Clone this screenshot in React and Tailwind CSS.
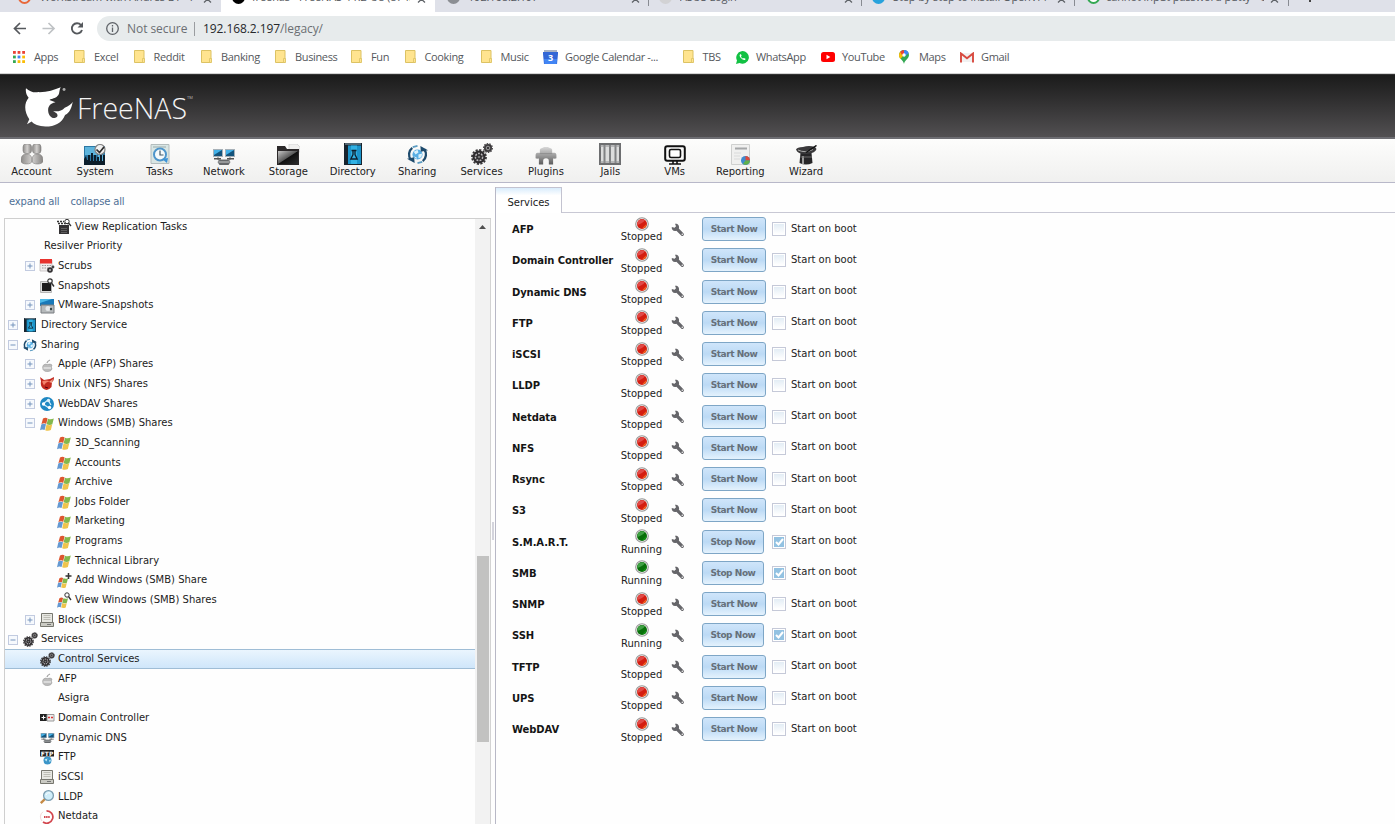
import React from "react";

const SANS = "font-['DejaVu_Sans',Verdana,sans-serif]";
const CHROME = "font-['Open_Sans','Noto_Sans',sans-serif]";

/* ---------- small icons ---------- */
const Folder = () => (
  <svg width="12" height="14" viewBox="0 0 12 14"><path d="M.5.5h9.500v12H.5z" fill="#ffe48f" stroke="#dcc263" /><path d="M8.500 8.500h2v4h-2z" fill="#ffe48f" stroke="#dcc263" strokeWidth=".8" /></svg>
);
const AppsGrid = () => {
  const c = ["#ea4335", "#ea4335", "#ea4335", "#34a853", "#4285f4", "#fbbc05", "#34a853", "#fbbc05", "#fbbc05"];
  return <svg width="12" height="12" viewBox="0 0 12 12">{c.map((f, i) => <rect key={i} x={(i % 3) * 4.6} y={Math.floor(i / 3) * 4.6} width="2.800" height="2.800" fill={f} />)}</svg>;
};
const Calendar = () => (
  <svg width="15" height="14" viewBox="0 0 15 14"><path d="M1 0h13v4H1z" fill="#a9b3c4" /><path d="M0 2h15v2l-1 10H1L0 4z" fill="#3367d6" /><path d="M1 9h13l-.5 5h-12z" fill="#4285f4" /><text x="7.500" y="11" textAnchor="middle" fontSize="9" fontWeight="bold" fill="#fff" fontFamily="Open Sans">3</text></svg>
);
const WhatsApp = () => (
  <svg width="13" height="13" viewBox="0 0 13 13"><path d="M0 13l1-3.600A6.300 6.300 0 1 1 3.600 12z" fill="#12c143" /><path d="M4.200 3.200c-1 .8-.7 2.200.7 3.900 1.500 1.800 3.500 2.500 4.400 1.600l.2-1-1.700-.8-.8.7c-1-.4-1.600-1-2-2l.6-.8-.6-1.600z" fill="#fff" /></svg>
);
const YouTube = () => <svg width="14" height="10" viewBox="0 0 14 10"><rect width="14" height="10" rx="2.500" fill="#f00" /><path d="M5.500 2.800v4.400L9.300 5z" fill="#fff" /></svg>;
const MapsPin = () => (
  <svg width="10" height="14" viewBox="0 0 10 14"><path d="M5 14C4.500 10.500 0 8.500 0 5a5 5 0 0 1 10 0c0 3.500-4.500 5.500-5 9z" fill="#34a853" /><path d="M0 5a5 5 0 0 1 1.200-3.200L5 5 1.300 9A6 6 0 0 1 0 5z" fill="#fbbc04" /><path d="M1.200 1.800A5 5 0 0 1 5 0l.5 4L3 5z" fill="#ea4335" /><path d="M5 0a5 5 0 0 1 4.700 3.300L5 7z" fill="#4285f4" /><circle cx="5" cy="5" r="1.700" fill="#fff" /></svg>
);
const Gmail = () => <svg width="14" height="11" viewBox="0 0 14 11"><path d="M2 1h10v9H2z" fill="#f1f1f1" /><path d="M1 10.500V1.500l6 4.800 6-4.800v9" fill="none" stroke="#d8493e" strokeWidth="1.900" /></svg>;

const Gears = ({ s }) => (
  <svg width={s} height={s} viewBox="0 0 22 22">
    <circle cx="8" cy="14" r="6.500" fill="#2e2c2e" /><circle cx="8" cy="14" r="7" fill="none" stroke="#383638" strokeWidth="1.800" strokeDasharray="2.200 1.460" />
    <circle cx="8" cy="14" r="3.600" fill="none" stroke="#b9b6b9" strokeWidth="1.500" strokeDasharray="1.900 1.200" /><circle cx="8" cy="14" r="1.300" fill="#777" />
    <circle cx="17" cy="5" r="4" fill="#3b393b" /><circle cx="17" cy="5" r="4.300" fill="none" stroke="#4a484a" strokeWidth="1.400" strokeDasharray="1.500 1.130" /><circle cx="17" cy="5" r="1.800" fill="none" stroke="#aaa" strokeWidth=".9" />
  </svg>
);
const Share = ({ s }) => (
  <svg width={s} height={s} viewBox="0 0 22 22">
    <circle cx="11" cy="11" r="5.300" fill="#58aee4" /><path d="M7 8l4-2 1 3-3 2zM12 11l4-1-1 4-3 1zM7 13l3 1v2z" fill="#d9f1fc" />
    <path d="M5.500 4A9 9 0 0 0 4 16.500M16.500 18A9 9 0 0 0 18 5.500" fill="none" stroke="#1d4a6c" strokeWidth="2.400" />
    <path d="M0 15.500l8 4.500-.500-6zM22 6.500L14 2l.5 6z" fill="#1d4a6c" /><path d="M6 3.200l5-1.200M16 18.800l-5 1.200" stroke="#5b9cc2" strokeWidth="1.800" />
  </svg>
);
const Book = ({ w, h }) => (
  <svg width={w} height={h} viewBox="0 0 18 22" preserveAspectRatio="none"><rect width="18" height="22" fill="#17242e" /><path d="M1 1h16" stroke="#94a9b5" /><path d="M4 2.500h13V21H4z" fill="#1b93c9" /><path d="M7 2.500h6V21H7z" fill="#31b1e3" /><path d="M7.500 7.500h5M9 7.500v4L6.800 16h6.400L11 11.500v-4" fill="none" stroke="#10202c" strokeWidth="1.300" /></svg>
);

const AccountI = () => (
  <svg width="22" height="21" viewBox="0 0 22 21"><defs><linearGradient id="gr" x1="0" x2="1"><stop offset="0" stopColor="#8d8b89" /><stop offset=".5" stopColor="#d2d0ce" /><stop offset="1" stopColor="#858381" /></linearGradient></defs>
    <rect x="2" y="0" width="8.500" height="9.500" rx="3" fill="url(#gr)" stroke="#807e7c" strokeWidth=".6" /><rect x="11.500" y="0" width="8.500" height="9.500" rx="3" fill="url(#gr)" stroke="#807e7c" strokeWidth=".6" />
    <path d="M0 17c0-5 2-7 5.500-7S11 12 11 17c0 4-11 4-11 0zM11 17c0-5 2-7 5.500-7s5.500 2 5.500 7c0 4-11 4-11 0z" fill="url(#gr)" stroke="#807e7c" strokeWidth=".6" /></svg>
);
const SystemI = () => (
  <svg width="22" height="21" viewBox="0 0 22 21"><path d="M0 2h21v19H0z" fill="#2c77a3" /><path d="M1 3h12v8H1zM14 11h6v6h-6z" fill="#5db4dc" /><path d="M0 21v-6l2-3 1 4h1v-5h2v6h1V9h2v8h1v-6h2v6h1v-4h2v4h1v-6h2v6h1v-6h2v10z" fill="#0c1e2b" /><circle cx="16" cy="5.500" r="5" fill="#f1f1f1" stroke="#858585" strokeWidth="1.200" /><path d="M12.500 5.500l3 3L20 3" fill="none" stroke="#2b2b2b" strokeWidth="1.700" /></svg>
);
const TasksI = () => (
  <svg width="20" height="21" viewBox="0 0 20 21"><path d="M1 .5h18v19H1z" fill="#d9e6e4" stroke="#b4bdbd" /><path d="M3 3h13" stroke="#9aabac" /><circle cx="10" cy="10.500" r="6" fill="#f5fafb" stroke="#4e95cb" strokeWidth="2" /><path d="M10 6.500V11h3.500" fill="none" stroke="#465a68" strokeWidth="1.200" /><path d="M12 15l5 4 1-5z" fill="#3d93d7" /></svg>
);
const NetworkI = ({ w = 22, h = 16 }) => (
  <svg width={w} height={h} viewBox="0 0 22 16"><path d="M0 0h10v8H0zM12 0h10v8H12z" fill="#a7b1b8" /><path d="M1 1h8v6H1zM13 1h8v6h-8z" fill="#14547c" /><path d="M1 1h8L1 6zM13 1h8l-8 5z" fill="#43b1e8" /><path d="M5 8v3h12V8" fill="none" stroke="#777" /><path d="M1 9h7v1.500H1zM14 9h7v1.500h-7z" fill="#555" /><path d="M6.500 11h9l2 2-2 3h-9l-2-3z" fill="#65686b" /><path d="M5.500 13h11" stroke="#c9cacb" /></svg>
);
const StorageI = () => (
  <svg width="23" height="21" viewBox="0 0 23 21"><defs><linearGradient id="st" x1="0" y1="0" x2="1" y2="1"><stop offset="0" stopColor="#c6c6c6" /><stop offset=".48" stopColor="#5a5a5a" /><stop offset=".52" stopColor="#101010" /><stop offset="1" stopColor="#2c2c2c" /></linearGradient></defs><path d="M12 0h8l3 3v5H12z" fill="#f0f0ef" stroke="#c6c6c6" strokeWidth=".6" /><path d="M0 2h8l2 3h12v16H0z" fill="#2b2829" /><path d="M1 7h20v13H1z" fill="url(#st)" /></svg>
);
const PluginsI = () => (
  <svg width="22" height="18" viewBox="0 0 22 19"><defs><linearGradient id="pl" x2="0" y2="1"><stop offset="0" stopColor="#d8d8d8" /><stop offset="1" stopColor="#5c5c5c" /></linearGradient></defs><path d="M4.500 3q.5-2 2.500-2l2-1h4l2 1q2 0 2.500 2v3h2.500q2 0 2 3v3q-2 1-3 0l-.5 1v5.500h-4.500V15q0-3-3-3t-3 3v3.500H3.500V13L3 12q-1 1-3 0V9q0-3 2-3h2.500z" fill="url(#pl)" /><path d="M4.500 7h13" stroke="#858585" strokeWidth=".8" /></svg>
);
const JailsI = () => (
  <svg width="22" height="22" viewBox="0 0 22 22"><path d="M1 1h20v20H1z" fill="#dcdddd" stroke="#6d6e70" strokeWidth="2" /><path d="M5.500 2v18M11 2v18M16.500 2v18" stroke="#808284" strokeWidth="2" /><path d="M1 3h20M1 19h20" stroke="#8f9092" /></svg>
);
const VMsI = () => (
  <svg width="22" height="20" viewBox="0 0 22 20"><rect x="1.200" y="1.200" width="19.600" height="14.600" rx="2" fill="#f9f9f8" stroke="#111" strokeWidth="2" /><rect x="5.500" y="4.500" width="11" height="8" rx="1.500" fill="#fff" stroke="#111" strokeWidth="1.600" /><path d="M9 16v3M13 16v3M5 19h12" stroke="#111" strokeWidth="1.600" /></svg>
);
const ReportI = () => (
  <svg width="19" height="21" viewBox="0 0 19 21"><path d="M.5.5h18v20H.5z" fill="#f0f0ef" stroke="#cfd0cf" /><path d="M4 4.500h12" stroke="#a5a7a8" strokeWidth="2" /><path d="M3 9h7M3 12h6M3 15h6" stroke="#d9dada" /><circle cx="14.500" cy="16.500" r="4.500" fill="#3f89cf" /><path d="M14.500 16.500V12A4.500 4.500 0 0 1 19 16.500z" fill="#dc4b3c" /><path d="M14.500 16.500H19a4.500 4.500 0 0 1-7 3.500z" fill="#5fb14a" /></svg>
);
const WizardI = () => (
  <svg width="22" height="20" viewBox="0 0 22 20"><path d="M5.500 8h11l1 10q-6.500 3-13 0z" fill="#262527" /><path d="M8 11v8" stroke="#9a9a9a" strokeWidth="2" /><path d="M1 4.500Q2 2 8 2q6-2 12 0l1.500 2q-1 4-9 5-10 .5-11.500-4.500z" fill="#3a393b" /><path d="M3 5q7 3.500 15-.5" stroke="#aaa" fill="none" /><path d="M11 7.500L21.500.5" stroke="#111" strokeWidth="1.500" /><path d="M5.500 12h11.500" stroke="#6d6d6d" /></svg>
);

const WinFlag = () => (
  <g><path d="M3 1.500C5 .2 6.700.7 7.600 1.400L6.200 6.900C4.600 6.100 3 6.200 1.400 7.200z" fill="#dd5630" /><path d="M8 1.700c1.900.9 3.800.8 5.800-.2l-1.500 5.800C10.700 8.200 8.500 8.200 6.600 7.200z" fill="#83b84c" /><path d="M1.300 7.500C2.800 6.600 4.500 6.500 6 7.300L4.600 13c-1.500-.8-3.100-.8-4.600.3z" fill="#6499d2" /><path d="M6.500 7.600c1.900.9 3.800 1 5.700 0L10.900 13c-1.900 1.100-4 1-5.700.2z" fill="#efc44c" /></g>
);
const S = ({ children }) => <svg width="14" height="14" viewBox="0 0 14 14" className="overflow-visible">{children}</svg>;
const treeIcons = {
  rep: <S><path d="M2 5h10v9H2z" fill="#343234" /><path d="M4 8.500h6M4 10.500h6M4 12.500h6" stroke="#6b696b" strokeWidth=".8" /><path d="M0 1.500h7M1 3.500h11" stroke="#333" strokeWidth="1.500" strokeDasharray="2 1" /><circle cx="10" cy="1.500" r="2.200" fill="#fff" stroke="#333" /><path d="M11.500 3l2.500 3" stroke="#333" strokeWidth="1.300" /></S>,
  scrub: <S><path d="M0 1h12v11H0z" fill="#f2eeee" stroke="#b9b4b4" strokeWidth=".7" /><path d="M0 0h12v4.500H0z" fill="#e8332e" /><path d="M2 6.500h9M2 9h7" stroke="#999" strokeDasharray="1.500 1" /><circle cx="10" cy="11" r="2.800" fill="#353335" /><circle cx="10" cy="11" r="1" fill="#bbb" /><circle cx="13" cy="8" r="1.400" fill="#444" /></S>,
  snap: <S><path d="M.5 2.500h11v11H.5z" fill="#ddd" stroke="#b6b6b6" /><path d="M2 4h9v8H2z" fill="#1b1a1b" /><circle cx="10" cy="2" r="2.200" fill="#fff" stroke="#333" strokeWidth="1.200" /><path d="M11.500 4l2.500 3.500" stroke="#333" strokeWidth="1.400" /></S>,
  vm: <S><path d="M0 0h14v7H0z" fill="#1878b8" /><path d="M0 0h12L0 4z" fill="#4ab8e8" /><path d="M1 6h13v8H1z" fill="#b5b9bb" stroke="#787d80" /><circle cx="8" cy="9.500" r="2.500" fill="#e3e7e9" /><circle cx="11" cy="10" r="1.200" fill="#344" /></S>,
  dir: <Book w={12} h={14} />,
  share: <Share s={14} />,
  apple: <S><path d="M3.500 7q2-1.500 4-.5 3-1 4.500.5-1.500 2 0 4-1 2.500-4 2.500-4 .5-5-2-1-3 .5-4.500z" fill="#bcbcbc" stroke="#999" strokeWidth=".6" /><path d="M7 5q.5-2 3-3" stroke="#a5a5a5" fill="none" strokeWidth="1.300" /><path d="M3.500 10h7.500" stroke="#efefef" strokeWidth="1.200" /></S>,
  unix: <S><path d="M0 0l4 3 6-1 4-2q0 4-2 5l-.5 5q-4 5-8.500 1.500-3-3-2-7.500z" fill="#c22a20" /><path d="M2 4.500q4-2 8 0-4 0-6 4z" fill="#f3826c" /><path d="M9 5l4-3-1 4z" fill="#f0a48c" /><path d="M5 10l3 1" stroke="#501" /></S>,
  web: <S><circle cx="7" cy="7" r="7" fill="#2088c2" /><path d="M3 7l5-4M3 7l6 4M8 3l3 5" stroke="#d7f1fb" strokeWidth="1.200" /><circle cx="3.500" cy="7" r="1.700" fill="#fff" /><circle cx="8.500" cy="3.500" r="1.700" fill="#d9f1fb" /><circle cx="9.500" cy="10.500" r="1.700" fill="#fff" /></S>,
  win: <S><WinFlag /></S>,
  winAdd: <S><g transform="translate(0 3) scale(.8)"><WinFlag /></g><path d="M11.500-1v6M8.500 2h6" stroke="#333" strokeWidth="1.500" /></S>,
  winView: <S><g transform="translate(0 3) scale(.8)"><WinFlag /></g><circle cx="10" cy="1" r="2.200" fill="#fff" stroke="#333" /><path d="M11.500 2.500L14 6" stroke="#333" strokeWidth="1.300" /></S>,
  block: <S><path d="M1.500.5h11v9h-11z" fill="#e7e7e2" stroke="#77776f" /><path d="M3.500 2.500h7M3.500 4.500h7M3.500 6.500h7" stroke="#bdbdb5" /><path d="M.5 9.500h13v4H.500z" fill="#cacac3" stroke="#77776f" /><path d="M7 11.500h4" stroke="#777" /></S>,
  gears: <Gears s={15} />,
  dc: <S><path d="M0 3h7v7H0z" fill="#222" /><path d="M7 3.500h7v6.500H7z" fill="#eee" stroke="#999" /><path d="M1.500 6.500h4M3.500 4.500v4" stroke="#fff" /><path d="M8 6.500h5" stroke="#d33" strokeWidth="1.500" strokeDasharray="2 1" /></S>,
  net: <NetworkI w={15} h={10} />,
  ftp: <S><path d="M0-1h14v6.500H0z" fill="#222" /><text x="7" y="4.600" textAnchor="middle" fontSize="6" fontWeight="bold" fill="#fff" fontFamily="DejaVu Sans">FTP</text><circle cx="7.500" cy="9.500" r="4" fill="#3a95c8" /><path d="M4.500 8.500l3-1-1 3zM9 9.500l2-1-1 3z" fill="#c6ecf7" /></S>,
  lldp: <S><path d="M5.500 8.500L.8 13.200" stroke="#c58a45" strokeWidth="2.400" /><circle cx="8.500" cy="5.500" r="4.900" fill="#d0eefa" stroke="#7b9db0" strokeWidth="1.300" /><path d="M6 5a3 3 0 0 1 4-2" stroke="#fff" fill="none" /></S>,
  nd: <S><path d="M6.500 .8A6.200 6.200 0 1 1 3 12" fill="none" stroke="#d2454d" strokeWidth="1.700" /><path d="M3 1.800A6.200 6.200 0 0 0 2 11" fill="none" stroke="#f3d5d7" /><path d="M4 7h6" stroke="#d2454d" strokeWidth="1.800" strokeDasharray="1.500 .6" /></S>,
};

/* ---------- data ---------- */
const tabs = [
  ["w-[221px] pl-[40px] bg-[#dfe1e9] rounded-br-lg", "Workstream with Andres BT - Pos", "w-[156px]", "left-[18px] border-[#e8683a] border-[2.5px]", "ml-[7px]"],
  ["w-[214px] pl-[31px] bg-white", "freenas - FreeNAS-11.2-U8 (874f)", "w-[158px]", "left-[11px] bg-black", "ml-[7px]"],
  ["w-[214px] pl-[33px] bg-[#dfe1e9] rounded-bl-lg", "192.168.2.197", "w-[156px]", "left-[12px] bg-[#8b8e93]", "ml-[7px]"],
  ["w-[213px] pl-[31px] bg-[#dfe1e9]", "ASUS Login", "w-[158px]", "left-[10px] bg-[#d2d2d4]", "ml-[6px]"],
  ["w-[213px] pl-[31px] bg-[#dfe1e9]", "Step by step to install OpenVPN", "w-[156px]", "left-[10px] bg-[#28a2dc]", "ml-[8px]"],
  ["w-[214px] pl-[31px] bg-[#dfe1e9]", "cannot input password putty - G", "w-[158px]", "left-[12px] border-[#34a853] border-[2.5px] bg-white", "ml-[6px]"],
];
const bookmarks = [
  [AppsGrid, "Apps", "w-[61px]", "pl-[21px]"], [Folder, "Excel", "w-[60px]", "pl-[20px]"], [Folder, "Reddit", "w-[67px]", "pl-[19.500px]"],
  [Folder, "Banking", "w-[74px]", "pl-[20px]"], [Folder, "Business", "w-[76px]", "pl-[20px]"], [Folder, "Fun", "w-[54px]", "pl-[20px]"],
  [Folder, "Cooking", "w-[76px]", "pl-[19.500px]"], [Folder, "Music", "w-[62px]", "pl-[19.500px]"], [Calendar, "Google Calendar -...", "w-[140px]", "pl-[22px]"],
  [Folder, "TBS", "w-[53px]", "pl-[19.500px]"], [WhatsApp, "WhatsApp", "w-[85px]", "pl-[20px]"], [YouTube, "YouTube", "w-[78px]", "pl-[21px]"],
  [MapsPin, "Maps", "w-[61px]", "pl-[20px]"], [Gmail, "Gmail", "w-[60px]", "pl-[21px]"],
];
const nav = [
  ["Account", <AccountI />], ["System", <SystemI />], ["Tasks", <TasksI />], ["Network", <NetworkI />], ["Storage", <StorageI />], ["Directory", <Book w={18} h={22} />],
  ["Sharing", <Share s={21} />], ["Services", <Gears s={22} />], ["Plugins", <PluginsI />], ["Jails", <JailsI />], ["VMs", <VMsI />], ["Reporting", <ReportI />], ["Wizard", <WizardI />],
];
/* label, depth, icon key, expander, selected */
const tree = [
  ["View Replication Tasks", 3, "rep"], ["Resilver Priority", 9, null], ["Scrubs", 2, "scrub", "+"], ["Snapshots", 2, "snap"], ["VMware-Snapshots", 2, "vm", "+"],
  ["Directory Service", 1, "dir", "+"], ["Sharing", 1, "share", "-"], ["Apple (AFP) Shares", 2, "apple", "+"], ["Unix (NFS) Shares", 2, "unix", "+"],
  ["WebDAV Shares", 2, "web", "+"], ["Windows (SMB) Shares", 2, "win", "-"], ["3D_Scanning", 3, "win"], ["Accounts", 3, "win"], ["Archive", 3, "win"],
  ["Jobs Folder", 3, "win"], ["Marketing", 3, "win"], ["Programs", 3, "win"], ["Technical Library", 3, "win"], ["Add Windows (SMB) Share", 3, "winAdd"],
  ["View Windows (SMB) Shares", 3, "winView"], ["Block (iSCSI)", 2, "block", "+"], ["Services", 1, "gears", "-"], ["Control Services", 2, "gears", "", true],
  ["AFP", 2, "apple"], ["Asigra", 2, null], ["Domain Controller", 2, "dc"], ["Dynamic DNS", 2, "net"], ["FTP", 2, "ftp"], ["iSCSI", 2, "block"], ["LLDP", 2, "lldp"], ["Netdata", 2, "nd"],
];
const indent = { 1: "pl-[3px]", 2: "pl-[20px]", 3: "pl-[37px]", 9: "pl-[6px]" };
const services = ["AFP", "Domain Controller", "Dynamic DNS", "FTP", "iSCSI", "LLDP", "Netdata", "NFS", "Rsync", "S3", "S.M.A.R.T.", "SMB", "SNMP", "SSH", "TFTP", "UPS", "WebDAV"];
const running = new Set(["S.M.A.R.T.", "SMB", "SSH"]);

/* ---------- sections ---------- */
function Browser() {
  return (
    <div className={`${CHROME} shrink-0 bg-white`}>
      <div className="flex h-[12px] overflow-hidden bg-[#dfe1e9]">
        {tabs.map(([cls, label, w, dot, xp], i) => (
          <div key={i} className={`relative flex h-[12px] shrink-0 items-start overflow-hidden ${cls}`}>
            <span className={`absolute top-[-9px] size-[13px] rounded-full ${dot}`} />
            <span className={`mt-[-11px] h-[16px] shrink-0 overflow-hidden text-[11px] leading-[16px] tracking-[-0.1px] whitespace-nowrap text-[#55585d] ${w}`}>{label}</span>
            <svg width="9" height="3" viewBox="0 0 9 3" className={`shrink-0 ${xp}`}><path d="M1-4l7 6.500M8-4l-7 6.500" stroke="#5f6368" strokeWidth="1.300" /></svg>
            {i > 1 && <span className="absolute right-0 h-[6px] w-px bg-[#888b92]" />}
          </div>
        ))}
        <div className="ml-[20px] h-[2px] w-[2px] bg-[#444]" />
      </div>
      <div className="flex h-[31px] items-start pt-[4px] pl-[13px]">
        <svg width="72" height="25" viewBox="0 0 72 25" fill="none" strokeWidth="1.700">
          <path d="M13 12.500H1.500M7 7l-5.500 5.500L7 18" stroke="#55585c" /><path d="M29.500 12.500H41M35.500 7l5.500 5.500-5.500 5.500" stroke="#bfc2c5" />
          <path d="M68 9a5.200 5.200 0 1 0 1 5" stroke="#55585c" strokeWidth="1.900" /><path d="M70 6v5.500h-5.500z" fill="#55585c" />
        </svg>
        <div className="ml-[12px] flex h-[25px] flex-1 items-center rounded-l-full bg-[#e7ebec] pl-[9px] text-[12px] text-[#6b6f73]">
          <svg width="13" height="13" viewBox="0 0 13 13" fill="none" stroke="#5f6368" strokeWidth="1.300"><circle cx="6.500" cy="6.500" r="5.800" /><path d="M6.500 5.500V10M6.500 3v1.500" /></svg>
          <span className="ml-[8px] w-[67px] tracking-[-0.05px] whitespace-nowrap">Not secure</span>
          <span className="h-[14px] w-px bg-[#9a9da0]" />
          <span className="ml-[8px] tracking-[-0.08px] whitespace-nowrap"><span className="text-[#26282b]">192.168.2.197</span>/legacy/</span>
        </div>
      </div>
      <div className="flex h-[31px] items-center border-b border-[#d3d3d3] pb-[2px] pl-[13px]">
        {bookmarks.map(([Icon, label, w, pl], i) => (
          <div key={i} className={`relative flex h-[20px] shrink-0 items-center ${w} ${pl}`}>
            <span className="absolute left-0 flex items-center"><Icon /></span>
            <span className="text-[11px] leading-[20px] tracking-[-0.35px] whitespace-nowrap text-[#55585c]">{label}</span>
          </div>
        ))}
      </div>
    </div>
  );
}

function Header() {
  return (
    <>
      <header className="flex h-[63px] shrink-0 items-start border-t border-[#333] bg-linear-to-b from-[#1b1b1b] to-[#525052] pl-[25px] text-white">
        <svg width="48" height="40" viewBox="30 22 145 120" className="mt-[12px] shrink-0">
          <path d="M33 25C44 34 56 40 70 37 95 38 118 30 138 22 132 32 136 42 128 49 121 58 112 55 104 61L122 68C104 72 99 83 100 94 101 107 110 117 120 115 129 112 130 107 126 102L115 94C127 97 141 94 150 84 161 80 171 73 174 66 172 79 167 99 151 106 142 130 120 141 92 141 72 141 57 134 50 126L36 134 43 119C28 98 26 72 41 54 34 45 31 35 33 25Z" fill="#fff" /><circle cx="148" cy="29" r="4.500" fill="#aaa" />
        </svg>
        <span className="mt-[12px] ml-[4px] w-[112px] origin-left scale-x-[0.95] font-['Open_Sans',sans-serif] text-[30px] leading-[42px] font-light whitespace-nowrap text-[#f4f4f4]">FreeNAS</span>
        <span className="mt-[20px] ml-[-2px] font-['Open_Sans',sans-serif] text-[4px] leading-[6px] text-[#bbb]">TM</span>
      </header>
      <nav className={`${SANS} flex h-[46px] shrink-0 border-t-2 border-b border-t-[#6d6d72] border-b-[#b8b8c9] bg-linear-to-b from-[#fdfdfc] to-[#f0f0ef]`}>
        {nav.map(([label, icon]) => (
          <div key={label} className={`flex shrink-0 flex-col items-center ${label === "Account" ? "w-[63px]" : label === "Reporting" ? "w-[67px]" : "w-[64.400px]"}`}>
            <span className="flex h-[26px] items-end justify-center">{icon}</span>
            <span className="mt-[1px] text-[10px] leading-[11px] whitespace-nowrap text-[#222]">{label}</span>
          </div>
        ))}
      </nav>
    </>
  );
}

function Expander({ kind }) {
  if (!kind) return <span className="w-[10px] shrink-0" />;
  return (
    <svg width="10" height="10" viewBox="0 0 10 10" className="mt-px shrink-0"><rect x=".5" y=".5" width="9" height="9" fill="#f6f9fd" stroke="#c2cbe0" /><path d={kind === "+" ? "M2.500 5h5M5 2.500v5" : "M2.500 5h5"} stroke="#7795bd" /></svg>
  );
}

function Sidebar() {
  return (
    <aside className="flex w-[491px] shrink-0 flex-col pl-[4px]">
      <div className="flex h-[36px] items-center gap-[11px] pl-[5px] text-[10px] tracking-[-0.15px] text-[#4f7096]"><span>expand all</span><span>collapse all</span></div>
      <div className="mt-[-1px] flex min-h-0 flex-1 border-t border-l border-[#cfcfcf]">
        <div className="min-w-0 flex-1 overflow-hidden">
          <div className="mt-[-2.500px]">
            {tree.map(([label, d, icon, ex, sel], i) => (
              <div key={i} className={`flex h-[19.660px] items-center ${indent[d]} ${sel ? "border-y border-[#9fbdd6] bg-linear-to-b from-[#eaf5fe] to-[#cfe6fa]" : ""}`}>
                <Expander kind={ex} />
                <span className="mt-[1.500px] ml-[4.500px] flex w-[15px] shrink-0 justify-center">{treeIcons[icon]}</span>
                <span className="mt-[0.600px] ml-[3.500px] text-[10px] leading-[16px] whitespace-nowrap text-[#1c1c1c]">{label}</span>
              </div>
            ))}
          </div>
        </div>
        <div className="flex w-[16px] shrink-0 flex-col items-center border-r border-[#d3d3d3] bg-[#f2f2f2] pt-[6px]">
          <svg width="7" height="4" viewBox="0 0 7 4"><path d="M0 4l3.500-4L7 4z" fill="#505050" /></svg>
          <div className="mt-[327px] h-[186px] w-[12px] bg-[#c2c2c1]" />
        </div>
      </div>
    </aside>
  );
}

const Light = ({ on }) => (
  <svg width="14" height="14" viewBox="0 0 14 14"><circle cx="7" cy="7" r="6.300" fill="#f4f4f2" stroke="#989898" strokeWidth="1.100" /><circle cx="7" cy="7" r="5" fill={on ? "#08700a" : "#d41d10"} /><path d="M2.400 8A4.800 4.800 0 0 1 10 3.200C8 6 5 7 2.400 8z" fill={on ? "#40a044" : "#e04a48"} /><path d="M7 11.500A4.800 4.800 0 0 0 11.500 7z" fill={on ? "#129414" : "#f36a1e"} /></svg>
);
const Wrench = () => (
  <svg width="14" height="14" viewBox="0 0 14 14"><path d="M5.500 5.500l5.800 5.800" stroke="#66666a" strokeWidth="3.200" strokeLinecap="round" /><path d="M4 .8L5 3.300 3.600 4.700.8 4C.2 6.500 2.500 8.700 5.300 7.800L8 5.200C8.600 2.500 6.500.2 4 .8z" fill="#66666a" /><circle cx="11.300" cy="11.300" r=".8" fill="#eee" /></svg>
);

function ServiceRow({ name }) {
  const on = running.has(name);
  return (
    <div className="flex h-[31.280px] shrink-0 items-start pl-[16px]">
      <b className="mt-[10px] w-[109px] text-[10px] leading-[14px] tracking-[-0.1px] whitespace-nowrap text-[#151515]">{name}</b>
      <div className="flex w-[41px] flex-col items-center pt-[3.500px]"><Light on={on} /><span className="mt-[0.800px] text-[10px] leading-[12px] text-[#222]">{on ? "Running" : "Stopped"}</span></div>
      <span className="mt-[9.500px] ml-[8.500px] w-[31.500px]"><Wrench /></span>
      <div className="w-[69px] pt-[4px]">
        <button className={`block h-[24px] rounded-[3px] border border-[#7ea6c6] bg-linear-to-b from-[#cfe5fa] via-[#bcdaf5] to-[#e4f2fd] text-[9px] leading-[20px] font-bold tracking-[-0.450px] whitespace-nowrap text-[#66707a] ${on ? "w-[62px]" : "w-[64px]"}`}>{on ? "Stop Now" : "Start Now"}</button>
      </div>
      <span className="mt-[9px] ml-[1px] flex size-[14px] items-center justify-center border border-[#c5c9d8] bg-white">
        <span className={`flex size-[10px] items-center justify-center ${on ? "bg-[#93c2e2]" : "bg-linear-to-b from-[#e3edf5] to-white"}`}>{on && <svg width="9" height="8" viewBox="0 0 9 8"><path d="M1 4l2.500 2.500L8 1" fill="none" stroke="#fff" strokeWidth="2" /></svg>}</span>
      </span>
      <span className="mt-[8.500px] ml-[5px] text-[10px] leading-[14px] whitespace-nowrap text-[#222]">Start on boot</span>
    </div>
  );
}

export default function App() {
  return (
    <div className="flex h-[824px] w-[1395px] flex-col overflow-hidden bg-[#fefefe]">
      <Browser />
      <Header />
      <main className={`${SANS} flex min-h-0 flex-1`}>
        <Sidebar />
        <div className="flex w-[4px] items-center"><span className="mt-[54px] ml-[1px] h-[18px] w-[2px] bg-[#d4d4dc]" /></div>
        <section className="mt-[4px] flex min-w-0 flex-1 flex-col border-l border-[#b8b8c6]">
          <div className="flex h-[26px] shrink-0">
            <div className="flex w-[66px] items-center justify-center border-t border-r border-[#c3c3d0] bg-linear-to-b from-[#d9ecfc] from-0% to-white to-30% pt-[4px] text-[10px] text-[#222]">Services</div>
            <div className="flex-1 border-b border-[#c8c8d4]" />
          </div>
          <div className="flex flex-col">{services.map((s) => <ServiceRow key={s} name={s} />)}</div>
        </section>
      </main>
    </div>
  );
}
